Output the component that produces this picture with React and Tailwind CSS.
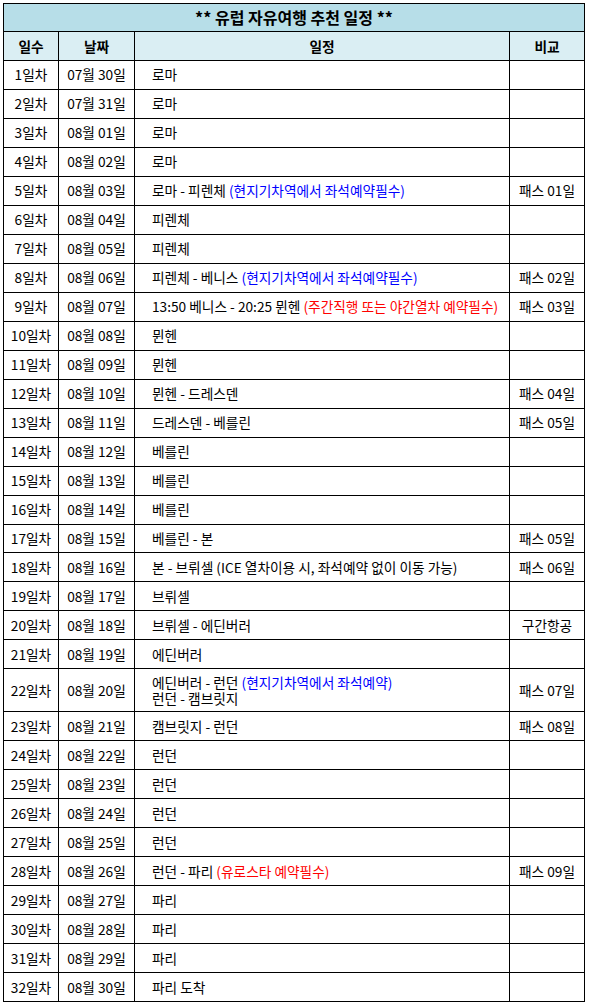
import React from 'react';

const B = ({ children }) => <span className="text-[#0000ff]">{children}</span>;
const R = ({ children }) => <span className="text-[#ff0000]">{children}</span>;

const rows = [
    ['07월 30일', '로마'],
    ['07월 31일', '로마'],
    ['08월 01일', '로마'],
    ['08월 02일', '로마'],
    ['08월 03일', <>로마 - 피렌체 <B>(현지기차역에서 좌석예약필수)</B></>, '패스 01일'],
    ['08월 04일', '피렌체'],
    ['08월 05일', '피렌체'],
    ['08월 06일', <>피렌체 - 베니스 <B>(현지기차역에서 좌석예약필수)</B></>, '패스 02일'],
    ['08월 07일', <>13:50 베니스 - 20:25 뮌헨 <R>(주간직행 또는 야간열차 예약필수)</R></>, '패스 03일'],
    ['08월 08일', '뮌헨'],
    ['08월 09일', '뮌헨'],
    ['08월 10일', '뮌헨 - 드레스덴', '패스 04일'],
    ['08월 11일', '드레스덴 - 베를린', '패스 05일'],
    ['08월 12일', '베를린'],
    ['08월 13일', '베를린'],
    ['08월 14일', '베를린'],
    ['08월 15일', '베를린 - 본', '패스 05일'],
    ['08월 16일', '본 - 브뤼셀 (ICE 열차이용 시, 좌석예약 없이 이동 가능)', '패스 06일'],
    ['08월 17일', '브뤼셀'],
    ['08월 18일', '브뤼셀 - 에딘버러', '구간항공'],
    ['08월 19일', '에딘버러'],
    ['08월 20일', <>에딘버러 - 런던 <B>(현지기차역에서 좌석예약)</B><br />런던 - 캠브릿지</>, '패스 07일', true],
    ['08월 21일', '캠브릿지 - 런던', '패스 08일'],
    ['08월 22일', '런던'],
    ['08월 23일', '런던'],
    ['08월 24일', '런던'],
    ['08월 25일', '런던'],
    ['08월 26일', <>런던 - 파리 <R>(유로스타 예약필수)</R></>, '패스 09일'],
    ['08월 27일', '파리'],
    ['08월 28일', '파리'],
    ['08월 29일', '파리'],
    ['08월 30일', '파리 도착'],
];

export default function App() {
    return (
        <div className="bg-white min-h-screen pt-[3px] pl-[3px]" style={{ fontFamily: '"Noto Sans CJK KR", "Noto Sans", sans-serif' }}>
            <table className="w-[581px] border-collapse table-fixed text-[13.7px] text-black leading-[15px]">
                <colgroup>
                    <col className="w-[55px]" />
                    <col className="w-[76px]" />
                    <col className="w-[375px]" />
                    <col className="w-[75px]" />
                </colgroup>
                <thead>
                    <tr>
                        <th colSpan={4} className="h-[28px] border border-black bg-[#b7dee8] text-[16px] font-bold text-center">
                            ** 유럽 자유여행 추천 일정 **
                        </th>
                    </tr>
                    <tr className="bg-[#daeef3]">
                        <th className="h-[29px] border border-black font-bold">일수</th>
                        <th className="border border-black font-bold">날짜</th>
                        <th className="border border-black font-bold">일정</th>
                        <th className="border border-black font-bold">비교</th>
                    </tr>
                </thead>
                <tbody>
                    {rows.map(([date, plan, note, tall], i) => (
                        <tr key={i}>
                            <td className={`border border-black text-center ${tall ? 'h-[43px]' : 'h-[28.97px]'}`}>{i + 1}일차</td>
                            <td className="border border-black text-center">{date}</td>
                            <td className={`border border-black pl-[17px] whitespace-nowrap ${tall ? 'leading-[16px]' : ''}`}>{plan}</td>
                            <td className="border border-black text-center">{note || ''}</td>
                        </tr>
                    ))}
                </tbody>
            </table>
        </div>
    );
}
